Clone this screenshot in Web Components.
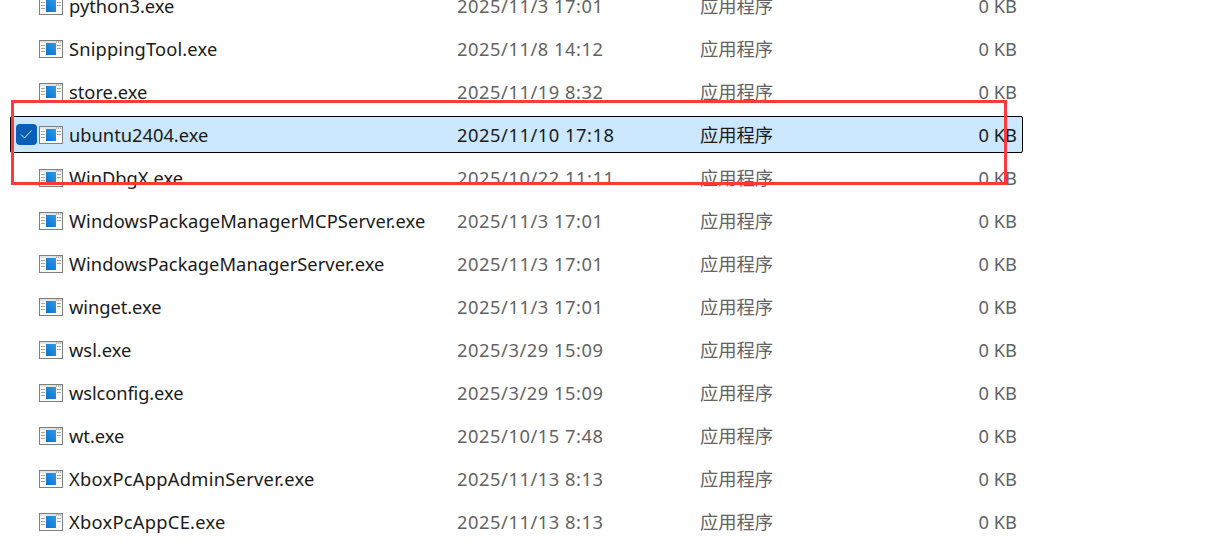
<!DOCTYPE html>
<html lang="zh">
<head>
<meta charset="utf-8">
<title>files</title>
<style>
  html, body { margin: 0; background: #fff; height: 100%; overflow: hidden; }
</style>
</head>
<body>
<file-list>
  <file-row name="python3.exe" date="2025/11/3 17:01" kind="应用程序" size="0 KB"></file-row>
  <file-row name="SnippingTool.exe" date="2025/11/8 14:12" kind="应用程序" size="0 KB" style="--track:.15px"></file-row>
  <file-row name="store.exe" date="2025/11/19 8:32" kind="应用程序" size="0 KB"></file-row>
  <file-row selected name="ubuntu2404.exe" date="2025/11/10 17:18" kind="应用程序" size="0 KB"></file-row>
  <file-row name="WinDbgX.exe" date="2025/10/22 11:11" kind="应用程序" size="0 KB"></file-row>
  <file-row name="WindowsPackageManagerMCPServer.exe" date="2025/11/3 17:01" kind="应用程序" size="0 KB" style="--track:.1px"></file-row>
  <file-row name="WindowsPackageManagerServer.exe" date="2025/11/3 17:01" kind="应用程序" size="0 KB" style="--track:.05px"></file-row>
  <file-row name="winget.exe" date="2025/11/3 17:01" kind="应用程序" size="0 KB" style="--track:-.05px"></file-row>
  <file-row name="wsl.exe" date="2025/3/29 15:09" kind="应用程序" size="0 KB"></file-row>
  <file-row name="wslconfig.exe" date="2025/3/29 15:09" kind="应用程序" size="0 KB" style="--track:-.1px"></file-row>
  <file-row name="wt.exe" date="2025/10/15 7:48" kind="应用程序" size="0 KB"></file-row>
  <file-row name="XboxPcAppAdminServer.exe" date="2025/11/13 8:13" kind="应用程序" size="0 KB" style="--track:.28px"></file-row>
  <file-row name="XboxPcAppCE.exe" date="2025/11/13 8:13" kind="应用程序" size="0 KB" style="--track:.28px"></file-row>
  <red-mark></red-mark>
</file-list>

<script>
class FileList extends HTMLElement {
  constructor() {
    super();
    this.attachShadow({ mode : 'open' });
    this.shadowRoot.innerHTML = `
      <style>
        :host {
          display: flex;
          flex-flow: column nowrap;
          gap: 6px;
          position: relative;
          width: 1013px;
          margin: -13px 0 0 10px;
          font: 18.3px/24px "Noto Sans", "Noto Sans CJK SC", sans-serif;
          color: #1a1a1a;
        }
      </style>
      <slot></slot>
    `;
  }
}

class FileRow extends HTMLElement {
  constructor() {
    super();
    this.attachShadow({ mode : 'open' });
    this.shadowRoot.innerHTML = this.template;
    for (let key of ['name', 'date', 'kind', 'size']) {
      this.shadowRoot.querySelector('#' + key).textContent = this.getAttribute(key);
    }
  }

  get template() {
    return `
      <style>
        * { box-sizing: border-box; }

        :host {
          display: grid;
          grid-template-columns: 23px 30px 388px 243px 1fr auto;
          align-items: center;
          box-sizing: border-box;
          height: 37px;
          padding: 0 5px;
          border: 1px solid transparent;
          border-radius: 2px;
          white-space: nowrap;
        }

        :host([selected]) {
          background: #cce8ff;
          border-color: #000;
        }

        #check {
          visibility: hidden;
          width: 21px;
          height: 21px;
          background: #0a5fb4;
          border-radius: 4px;
        }
        :host([selected]) #check { visibility: visible; }

        #file { margin-top: 1px; }
        #name { letter-spacing: var(--track, 0); }
        #date { letter-spacing: .55px; }
        #date, #kind, #size { color: #636363; }
        :host([selected]) #date, :host([selected]) #kind, :host([selected]) #size { color: #1a1a1a; }
        svg { display: block; }
      </style>
      <svg id="check" viewBox="0 0 21 21">
        <path d="M5 10.5l3.5 3.5 7-7.5" fill="none" stroke="#dbe9f8" stroke-width="1"/>
      </svg>
      <svg id="file" width="24" height="18" viewBox="0 0 24 18">
        <defs>
          <linearGradient id="blue" x1="0" y1="1" x2="1" y2="0">
            <stop offset="0" stop-color="#0a72cc"/>
            <stop offset="1" stop-color="#2a9bea"/>
          </linearGradient>
        </defs>
        <rect x=".5" y=".5" width="23" height="17" fill="#fbfbfb" stroke="#7f7f7f"/>
        <path d="M1 1h22v2H1z" fill="#e4e4e4"/>
        <path d="M17 2h1M19 2h1M21 2h1" stroke="#8a8a8a"/>
        <path d="M2 5.5h4M2 8.5h4M2 11.5h4M18 5.5h4M18 8.5h4" stroke="#a6a6a6"/>
        <rect x="7" y="3" width="10" height="12" fill="url(#blue)"/>
      </svg>
      <span id="name"></span>
      <span id="date"></span>
      <span id="kind"></span>
      <span id="size"></span>
    `;
  }
}

class RedMark extends HTMLElement {
  constructor() {
    super();
    this.attachShadow({ mode : 'open' });
    this.shadowRoot.innerHTML = `
      <style>
        :host {
          position: absolute;
          left: 1px;
          top: 113px;
          width: 996px;
          height: 85px;
          box-sizing: border-box;
          border: 3px solid #fc3a3a;
        }
      </style>
    `;
  }
}

customElements.define('file-list', FileList);
customElements.define('file-row', FileRow);
customElements.define('red-mark', RedMark);
</script>
</body>
</html>
